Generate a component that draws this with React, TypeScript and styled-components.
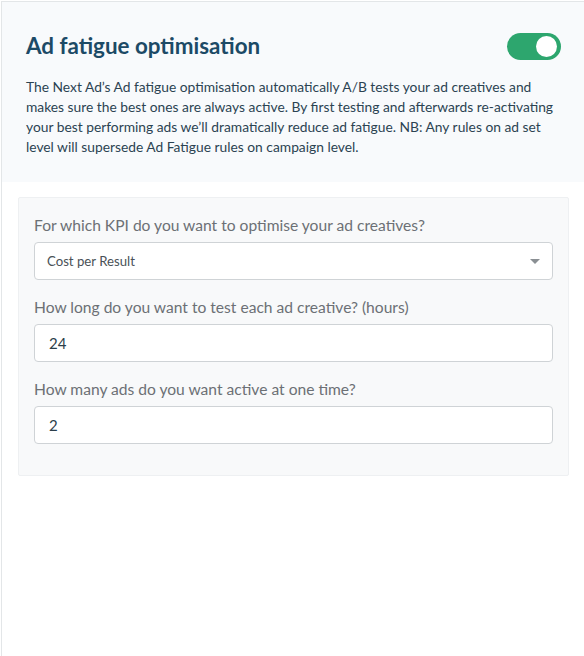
import React, { useState } from 'react';
import styled, { createGlobalStyle } from 'styled-components';

const GlobalStyle = createGlobalStyle`
    html, body {
        margin: 0;
        padding: 0;
        background: #ffffff;
    }
    body {
        font-family: Lato, 'Open Sans', sans-serif;
    }
    * {
        box-sizing: border-box;
    }
`;

const App = () => {
    const [enabled, setEnabled] = useState(true);
    const [kpi, setKpi] = useState('cpr');
    const [hours, setHours] = useState('24');
    const [activeAds, setActiveAds] = useState('2');

    return (
        <>
            <GlobalStyle />
            <Wrapper>
                <Header>
                    <TitleRow>
                        <Title>Ad fatigue optimisation</Title>
                        <Toggle
                            type='button'
                            $on={enabled}
                            onClick={() => setEnabled(!enabled)}
                            aria-pressed={enabled}
                        >
                            <Knob />
                        </Toggle>
                    </TitleRow>
                    <Description>
                        The Next Ad’s Ad fatigue optimisation automatically A/B tests your ad creatives and
                        makes sure the best ones are always active. By first testing and afterwards re-activating
                        your best performing ads we’ll dramatically reduce ad fatigue. NB: Any rules on ad set
                        level will supersede Ad Fatigue rules on campaign level.
                    </Description>
                </Header>
                <Body>
                    <Panel>
                        <Field>
                            <Label>For which KPI do you want to optimise your ad creatives?</Label>
                            <SelectWrap>
                                <Select value={kpi} onChange={(e) => setKpi(e.target.value)}>
                                    <option value='cpr'>Cost per Result</option>
                                    <option value='ctr'>Click-through Rate</option>
                                    <option value='cpc'>Cost per Click</option>
                                </Select>
                                <Caret />
                            </SelectWrap>
                        </Field>
                        <Field>
                            <Label>How long do you want to test each ad creative? (hours)</Label>
                            <Input value={hours} onChange={(e) => setHours(e.target.value)} />
                        </Field>
                        <Field>
                            <Label>How many ads do you want active at one time?</Label>
                            <Input value={activeAds} onChange={(e) => setActiveAds(e.target.value)} />
                        </Field>
                    </Panel>
                </Body>
            </Wrapper>
        </>
    );
};

export default App;

const Wrapper = styled.div`
    margin-left: 1px;
    margin-top: 1px;
    min-height: 655px;
    border-left: 1px solid #e3e6e8;
    border-top: 1px solid #e3e6e8;
    background: #ffffff;
`;

const Header = styled.div`
    background: #f8fafc;
    padding: 29px 23px 25px 24px;
`;

const TitleRow = styled.div`
    display: flex;
    justify-content: space-between;
    align-items: center;
    margin-bottom: 16px;
`;

const Title = styled.h2`
    margin: 0;
    font-size: 22.4px;
    font-weight: 700;
    line-height: 30px;
    color: #1c4a66;
`;

const Toggle = styled.button<{ $on: boolean }>`
    width: 54px;
    height: 27px;
    border: none;
    border-radius: 14px;
    padding: 3px 4px;
    display: flex;
    align-items: center;
    justify-content: ${(p) => (p.$on ? 'flex-end' : 'flex-start')};
    background: ${(p) => (p.$on ? '#2da66e' : '#c8cdd1')};
    cursor: pointer;
    margin-top: 1px;
`;

const Knob = styled.span`
    width: 21px;
    height: 21px;
    border-radius: 50%;
    background: #ffffff;
`;

const Description = styled.p`
    margin: 0;
    max-width: 536px;
    font-size: 13.8px;
    line-height: 20px;
    color: #2b4352;
`;

const Body = styled.div`
    padding: 15px 15px 0 16px;
`;

const Panel = styled.div`
    background: #f8f9fa;
    border: 1px solid #eef0f2;
    border-radius: 2px;
    padding: 16px 15px 31px 15px;
    display: flex;
    flex-direction: column;
    gap: 16px;
`;

const Field = styled.div`
    display: flex;
    flex-direction: column;
    gap: 6px;
`;

const Label = styled.label`
    font-size: 15.6px;
    line-height: 22px;
    color: #6c7075;
`;

const SelectWrap = styled.div`
    position: relative;
`;

const Select = styled.select`
    appearance: none;
    width: 100%;
    height: 38px;
    padding: 0 30px 0 12px;
    font-family: Lato, sans-serif;
    font-size: 13.2px;
    color: #4a5157;
    background: #ffffff;
    border: 1px solid #cfd3d6;
    border-radius: 4px;
    outline: none;
`;

const Caret = styled.span`
    position: absolute;
    right: 13px;
    top: 17px;
    width: 0;
    height: 0;
    border-left: 5px solid transparent;
    border-right: 5px solid transparent;
    border-top: 5px solid #8a8f93;
    pointer-events: none;
`;

const Input = styled.input`
    width: 100%;
    height: 38px;
    padding: 0 14px;
    font-family: Lato, sans-serif;
    font-size: 15px;
    color: #2c3e4a;
    background: #ffffff;
    border: 1px solid #cfd3d6;
    border-radius: 4px;
    outline: none;
`;
